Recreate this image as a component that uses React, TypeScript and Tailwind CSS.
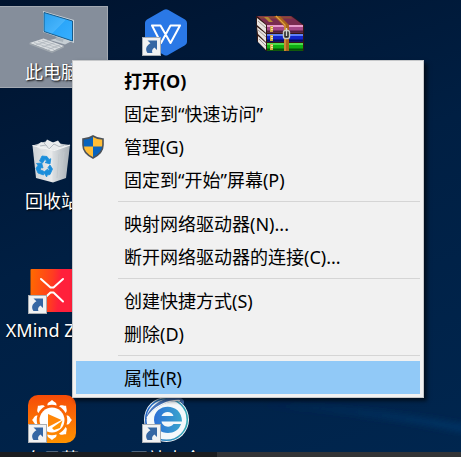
import type { ReactNode } from 'react'

interface DesktopIconProps {
  label?: string
  shortcut?: boolean
  selected?: boolean
  children?: ReactNode
}

interface MenuEntry {
  label: string
  bold?: boolean
  shield?: boolean
  active?: boolean
}

const menuGroups: MenuEntry[][] = [
  [
    { label: '打开(O)', bold: true },
    { label: '固定到“快速访问”' },
    { label: '管理(G)', shield: true },
    { label: '固定到“开始”屏幕(P)' },
  ],
  [{ label: '映射网络驱动器(N)...' }, { label: '断开网络驱动器的连接(C)...' }],
  [{ label: '创建快捷方式(S)' }, { label: '删除(D)' }],
  [{ label: '属性(R)', active: true }],
]

function ShortcutArrow() {
  return (
    <svg viewBox="0 0 19 19" className="absolute bottom-0 left-0 size-[19px]">
      <rect x="0.5" y="0.5" width="18" height="18" fill="#f1f2f3" stroke="#a9adb2" />
      <path d="M5.500 3.500H15V13l-2.600-2.600c-2.200 1.600-2.800 3.200-2 5.600H5.500C3 12.500 4 9 8.400 6.300Z" fill="#3566a3" />
    </svg>
  )
}

function DesktopIcon({ label, shortcut, selected, children }: DesktopIconProps) {
  return (
    <div
      className={`flex h-[82px] flex-col items-center gap-1 border pt-px ${
        selected ? 'border-[#a3a9b2] bg-[#858e9b]' : 'border-transparent'
      }`}
    >
      <div className="relative size-12 shrink-0">
        {children}
        {shortcut && <ShortcutArrow />}
      </div>
      <span className="text-lg/6 whitespace-nowrap text-white [text-shadow:1px_1px_2px_#000]">{label}</span>
    </div>
  )
}

function ComputerIcon() {
  return (
    <svg viewBox="0 0 48 48" className="size-full">
      <defs>
        <linearGradient id="screen" x1="0" y1="0" x2="1" y2="1">
          <stop offset="0" stopColor="#2a9fee" />
          <stop offset="0.5" stopColor="#45b3fb" />
          <stop offset="0.52" stopColor="#2ba6fa" />
          <stop offset="1" stopColor="#38b0ff" />
        </linearGradient>
      </defs>
      <path d="M22 32l8-2 14 3-7 3.500Z" fill="#c6ced4" />
      <path d="M29 27l7 2-1 5-7-2Z" fill="#aab4bc" />
      <path d="M15 3l31 9v23L15 24Z" fill="#cbd3d9" />
      <path d="M16 4.500l28.500 8.500v20L16 23.500Z" fill="url(#screen)" stroke="#175a89" strokeWidth="1" />
      <path d="M1.500 35l14-4.500L36 38l-12 5.500Z" fill="#d9dde0" />
      <path d="M1.500 35L24 43.500 36 38v1.500L24 45 1.500 36.500Z" fill="#9ea6ad" />
      <path d="M6 34.500l20 7M10 33.200l20 7M14 32l19 7M8 37l13-4.500M14 39.200l13-4.600M20 41.500l12-4.500" stroke="#aab2b9" strokeWidth="0.7" />
    </svg>
  )
}

function WpsIcon() {
  return (
    <svg viewBox="0 0 48 48" className="size-full">
      <path d="M22 1.800q2-1.200 4 0L43 11.500q2 1.200 2 3.500v19q0 2-2 3.200L26 47q-2 1.200-4 0L5 37.200q-2-1.200-2-3.200V15q0-2.300 2-3.500Z" fill="#2a78e6" />
      <path d="M10 17.500h8.500L28.500 35 38 17.500h-9.500L19 35Z" fill="none" stroke="#fff" strokeWidth="2" strokeLinejoin="round" />
    </svg>
  )
}

function RarIcon() {
  const books = [
    { y: 17, top: '#e79bcb', mid: '#a54787', low: '#50203f' },
    { y: 26, top: '#5f80f5', mid: '#1226c8', low: '#040d60' },
    { y: 35, top: '#4cdc4c', mid: '#0fae13', low: '#045306' },
  ]
  return (
    <svg viewBox="0 0 48 48" className="size-full">
      <path d="M0 8h36l12 9v26H10L1 33Z" fill="#321813" />
      <path d="M1 8h34l12 9H11Z" fill="#7a2c50" />
      <path d="M2 8.500h32l3 2H5Z" fill="#8b4a35" />
      <path d="M1 10l9 7v8l-9-8ZM1 19l9 7v8l-8-8ZM2 28l8 7v7l-8-8Z" fill="#e8e3e0" />
      <path d="M2 13l8 7M2 22l8 7M3 31l7 7" stroke="#a39b98" />
      {books.map((b) => (
        <g key={b.y}>
          <rect x="11" y={b.y} width="36" height="7.5" fill={b.mid} />
          <rect x="11" y={b.y} width="36" height="2" fill={b.top} />
          <rect x="11" y={b.y + 5.5} width="36" height="2" fill={b.low} />
          <rect x="14" y={b.y + 1} width="3" height="6" fill="#d1a645" />
          <path d={`M15 ${b.y + 2.5}h2m-2 2h2`} stroke="#fff4aa" strokeWidth="0.8" />
        </g>
      ))}
      <path d="M8 9h4l5 5h-4Z" fill="#b48b34" />
      <path d="M18 8h6l9 9v26h-5V18Z" fill="#aa631b" />
      <path d="M20 8l9 9v26" fill="none" stroke="#e0a245" strokeWidth="1.2" />
      <rect x="27.5" y="22.5" width="6" height="8" rx="2" fill="#292a2a" stroke="#c9c9c2" strokeWidth="1.4" />
      <path d="M30.500 20v8" stroke="#d4d7d7" strokeWidth="1.4" />
    </svg>
  )
}

function RecycleBinIcon() {
  return (
    <svg viewBox="0 0 48 48" className="size-full">
      <defs>
        <linearGradient id="bin">
          <stop stopColor="#ccd1d5" />
          <stop offset="0.5" stopColor="#e9ebec" />
          <stop offset="0.56" stopColor="#d9dde0" />
          <stop offset="1" stopColor="#a7afb5" />
        </linearGradient>
      </defs>
      <path d="M4.500 8.500L42 8l-4 33-13 4.500L8 41Z" fill="url(#bin)" />
      <path d="M4.500 8.500l13-4L42 8l-15 5.500Z" fill="#b9bfc4" />
      <path d="M8 9.500l5-4.500 4 1 2-3.500 6 3 5-2 3 4 6 1.500-12 4-9-1-5 .5Z" fill="#e9ecee" />
      <path d="M12 9l6-1 3 4 5-5 5 2.500 5-1M16 6l3 3" fill="none" stroke="#b3bac0" />
      <path d="M4.500 8.500l22 5L42 8" fill="none" stroke="#f4f5f5" strokeWidth="1.2" />
      <path d="M31 17l-2 24M36 15l-4 25" stroke="#c1c8cc" strokeWidth="0.8" />
      {/* three folded arrows */}
      <g fill="#1a8edb" stroke="#1a8edb" strokeWidth="0.8" strokeLinejoin="round">
        <path d="M11.500 24l2.500-5 5 .5 2 3 1.800-.8-.8 5.300-5-1.500 1.700-1.200-1.700-2-2.500 3.700Z" />
        <path d="M8.500 26.500l5.200-.5 1.300 5-1.800-.6-1 2.600 3.300 1v4L10 36l-2-4.500 2-3.300Z" />
        <path d="M22 28l2.500 4-2.500 5.500-3 .6-.3 1.900-3-4.700 4-3.300.2 1.500 1.600-1-1.500-2Z" />
      </g>
    </svg>
  )
}

function XmindIcon() {
  return (
    <svg viewBox="0 0 48 48" className="size-full">
      <defs>
        <linearGradient id="xmind" x1="0" y1="0.2" x2="1" y2="0.3">
          <stop stopColor="#ff6a00" />
          <stop offset="0.5" stopColor="#ff3d20" />
          <stop offset="0.7" stopColor="#ff203b" />
        </linearGradient>
      </defs>
      <rect x="2.5" y="3" width="43" height="43" rx="1" fill="url(#xmind)" />
      <path d="M13 13l9.500 8.500h3L35 13M13 35.500l9.500-9h3l9.500 9" fill="none" stroke="#fff" strokeWidth="2" strokeLinecap="round" strokeLinejoin="round" />
    </svg>
  )
}

function SunflowerIcon() {
  const petals = [0, 45, 90, 135, 180, 225, 270, 315]
  return (
    <svg viewBox="0 0 48 48" className="size-full">
      <defs>
        <linearGradient id="sun" x1="0" y1="0" x2="0" y2="1">
          <stop stopColor="#f64b08" />
          <stop offset="1" stopColor="#ff9300" />
        </linearGradient>
      </defs>
      <rect width="48" height="48" rx="10" fill="url(#sun)" />
      {petals.map((angle) => (
        <path
          key={angle}
          d="M19.500 10.500c-.5-3 2-3 4.500-5.500 2.500 2.500 5 2.500 4.500 5.500-2.500-1-6.500-1-9 0Z"
          fill="#fff"
          transform={`rotate(${angle} 24 25)`}
        />
      ))}
      <circle cx="24" cy="25" r="12.5" fill="#fff" />
      <path d="M20 19v13l13.500-7Z" fill="#ff8708" />
      <path d="M24 33l10.500-7.500-2.500 7.500-6 2Z" fill="#ff9300" />
    </svg>
  )
}

function BrowserIcon() {
  return (
    <svg viewBox="0 0 48 48" className="size-full">
      <defs>
        <linearGradient id="ring">
          <stop stopColor="#2365c8" />
          <stop offset="1" stopColor="#35a9b5" />
        </linearGradient>
        <linearGradient id="letter">
          <stop stopColor="#2c6fd6" />
          <stop offset="1" stopColor="#3aa5cd" />
        </linearGradient>
      </defs>
      <circle cx="24.5" cy="24.5" r="22.5" fill="#f4f8fb" />
      <circle cx="24.5" cy="24.5" r="20.8" fill="none" stroke="url(#ring)" strokeWidth="1.6" />
      <path d="M3 26C6 12 21 0 38 3c4 .6 5 4 3 7-1-3-3-4-6-4C22 6 9 15 3 26Z" fill="#4776bd" />
      <path d="M5 23C12 11 26 5 38 5.500" fill="none" stroke="#fff" strokeWidth="1.2" />
      <path
        d="M40 26.500H19.500c1 5.500 8.500 7 12 2.500h7.500C35 42 13 41 12 25 12 7.500 40 7 40 26.500Zm-8.500-5.500c-1.500-5.500-10-5.500-12 0Z"
        fill="url(#letter)"
      />
    </svg>
  )
}

function ShieldIcon() {
  return (
    <svg viewBox="0 0 22 24" className="size-6">
      <path d="M11 1C8 3 5 4 1 4v6c0 6 4 10 10 13 6-3 10-7 10-13V4c-4 0-7-1-10-3Z" fill="#ffbd36" />
      <path d="M11 1C8 3 5 4 1 4v7.500h10ZM11 11.500h10C20.500 17 17 20 11 23Z" fill="#0863bd" />
      <path d="M11 1C8 3 5 4 1 4v6c0 6 4 10 10 13 6-3 10-7 10-13V4c-4 0-7-1-10-3Z" fill="none" stroke="#4c5259" strokeWidth="1.6" />
    </svg>
  )
}

function ContextMenu() {
  return (
    <div
      role="menu"
      className="absolute top-[60px] left-[72px] w-88 border border-[#c6c8ca] bg-[#f1f1f1] p-[3px] text-black shadow-[3px_3px_4px_rgba(0,0,0,0.6)]"
    >
      {menuGroups.map((group, i) => (
        <div key={i}>
          {i > 0 && <hr className="my-[5px] ml-[42px] border-[#d5d5d5]" />}
          {group.map((entry) => (
            <button
              key={entry.label}
              type="button"
              role="menuitem"
              className={`flex h-[33px] w-full items-center text-left text-lg/6 whitespace-nowrap ${
                entry.active ? 'bg-[#91c9f7]' : ''
              } ${entry.bold ? 'font-bold' : ''}`}
            >
              <span className="w-12 shrink-0 pl-[5px]">{entry.shield && <ShieldIcon />}</span>
              {entry.label}
            </button>
          ))}
        </div>
      ))}
    </div>
  )
}

export default function App() {
  return (
    <div className="relative flex h-screen flex-col overflow-hidden bg-[linear-gradient(160deg,#00132e_0%,#001f43_45%,#00264f_100%)] font-['Noto_Sans','Noto_Sans_CJK_SC',sans-serif]">
      {/* light streak of the wallpaper */}
      <svg viewBox="0 0 200 60" className="absolute right-0 bottom-1 w-[200px]">
        <defs>
          <linearGradient id="streak">
            <stop stopColor="#04396c" stopOpacity="0" />
            <stop offset="1" stopColor="#043465" />
          </linearGradient>
          <filter id="soft">
            <feGaussianBlur stdDeviation="3" />
          </filter>
        </defs>
        <path d="M0 10C70 12 140 20 205 32v8C140 26 70 17 0 14Z" fill="url(#streak)" filter="url(#soft)" />
      </svg>

      <main className="-ml-1 grid min-h-0 flex-1 auto-rows-[82px] grid-cols-[repeat(4,112px)] gap-x-0.5 gap-y-[47px] overflow-hidden pt-1.5">
        <DesktopIcon label="此电脑" selected>
          <ComputerIcon />
        </DesktopIcon>
        <DesktopIcon shortcut>
          <WpsIcon />
        </DesktopIcon>
        <DesktopIcon>
          <RarIcon />
        </DesktopIcon>
        <div className="col-start-1">
          <DesktopIcon label="回收站">
            <RecycleBinIcon />
          </DesktopIcon>
        </div>
        <div className="col-start-1">
          <DesktopIcon label="XMind ZEN" shortcut>
            <XmindIcon />
          </DesktopIcon>
        </div>
        <div className="col-start-1">
          <DesktopIcon label="向日葵" shortcut>
            <SunflowerIcon />
          </DesktopIcon>
        </div>
        <DesktopIcon label="网站大全" shortcut>
          <BrowserIcon />
        </DesktopIcon>
      </main>

      <footer className="z-10 flex h-[5px] shrink-0 bg-[#333436]">
        <div className="w-[217px] bg-[#1b1d20]" />
      </footer>

      <ContextMenu />
    </div>
  )
}
